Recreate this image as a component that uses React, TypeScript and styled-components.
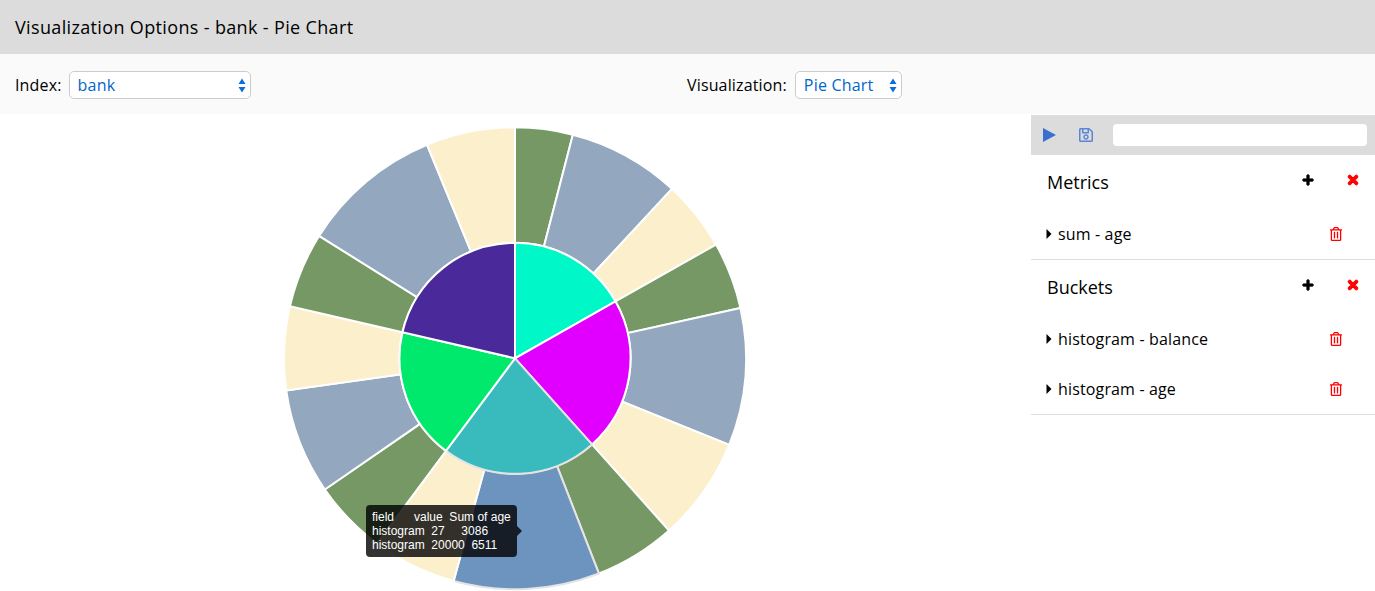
import React from 'react'
import styled, { createGlobalStyle } from 'styled-components'
import { FaPlus, FaRegSave, FaRegTrashAlt, FaTimes } from 'react-icons/fa'

const CX = 245
const CY = 244.3
const OUTER = 231
const INNER = 115.5

interface Slice {
  from: number;
  to: number;
  color: string;
  hovered?: boolean;
}

const innerSlices: Slice[] = [
  { from: 0, to: 60.5, color: '#00f7c8' },
  { from: 60.5, to: 138.2, color: '#e100ff' },
  { from: 138.2, to: 216.7, color: '#39bbbe', hovered: true },
  { from: 216.7, to: 283, color: '#00e96c' },
  { from: 283, to: 360, color: '#4a2a9a' },
]

const outerSlices: Slice[] = [
  { from: 0, to: 14.5, color: '#759865' },
  { from: 14.5, to: 42.8, color: '#93a7bf' },
  { from: 42.8, to: 60.5, color: '#fbefcc' },
  { from: 60.5, to: 77.4, color: '#759865' },
  { from: 77.4, to: 112, color: '#93a7bf' },
  { from: 112, to: 138.2, color: '#fbefcc' },
  { from: 138.2, to: 158.7, color: '#759865' },
  { from: 158.7, to: 195.4, color: '#6d93bf', hovered: true },
  { from: 195.4, to: 216.7, color: '#fbefcc' },
  { from: 216.7, to: 235.4, color: '#759865' },
  { from: 235.4, to: 262, color: '#93a7bf' },
  { from: 262, to: 283, color: '#fbefcc' },
  { from: 283, to: 302, color: '#759865' },
  { from: 302, to: 337.6, color: '#93a7bf' },
  { from: 337.6, to: 360, color: '#fbefcc' },
]

// Tooltip rows are space padded text, not table columns
const tooltipRows = [
  'field      value  Sum of age',
  'histogram  27     3086',
  'histogram  20000  6511',
]

const point = (radius: number, angle: number) => {
  const rad = (angle * Math.PI) / 180
  return `${CX + radius * Math.sin(rad)} ${CY - radius * Math.cos(rad)}`
}

// Arc path between two radii, angles measured clockwise from the top
const arcPath = (r0: number, r1: number, from: number, to: number) => {
  const large = to - from > 180 ? 1 : 0
  const start = `M${point(r1, from)} A${r1} ${r1} 0 ${large} 1 ${point(r1, to)}`
  if (r0 === 0) return `${start} L${CX} ${CY} Z`
  return `${start} L${point(r0, to)} A${r0} ${r0} 0 ${large} 0 ${point(r0, from)} Z`
}

const metrics = ['sum - age']
const buckets = ['histogram - balance', 'histogram - age']

const App: React.FC = () => {
  const renderItem = (label: string) => (
    <ItemRow key={label}>
      <ItemLabel>
        <svg width={6} height={10} viewBox="0 0 6 10">
          <path d="M0.5 0 L5.5 5 L0.5 10 Z" fill="#000" />
        </svg>
        {label}
      </ItemLabel>
      <TrashButton>
        <FaRegTrashAlt size={14} />
      </TrashButton>
    </ItemRow>
  )

  const renderSection = (title: string, items: string[]) => (
    <Section>
      <SectionHeader>
        <SectionTitle>{title}</SectionTitle>
        <SectionActions>
          <FaPlus size={12} color="#000" stroke="#000" strokeWidth={40} />
          <FaTimes size={14} color="#f00" stroke="#f00" strokeWidth={40} />
        </SectionActions>
      </SectionHeader>
      {items.map(renderItem)}
    </Section>
  )

  return (
    <>
      <GlobalStyle />
      <Header>Visualization Options - bank - Pie Chart</Header>
      <Toolbar>
        <IndexField>
          <FieldLabel>Index:</FieldLabel>
          <SelectBox $width={182}>
            <Select defaultValue="bank">
              <option>bank</option>
            </Select>
            <SelectArrows />
          </SelectBox>
        </IndexField>
        <VizField>
          <FieldLabel>Visualization:</FieldLabel>
          <SelectBox $width={107}>
            <Select defaultValue="Pie Chart">
              <option>Pie Chart</option>
            </Select>
            <SelectArrows />
          </SelectBox>
        </VizField>
      </Toolbar>
      <Main>
        <ChartArea>
          <ChartFrame>
            <svg width={490} height={477} viewBox="0 0 490 477">
              {outerSlices.map(s => (
                <Arc key={s.from} d={arcPath(INNER, OUTER, s.from, s.to)} fill={s.color} $hovered={s.hovered} />
              ))}
              {innerSlices.map(s => (
                <Arc key={s.from} d={arcPath(0, INNER, s.from, s.to)} fill={s.color} $hovered={s.hovered} />
              ))}
            </svg>
            <Tooltip>
              {tooltipRows.map(row => (
                <TooltipRow key={row}>{row}</TooltipRow>
              ))}
            </Tooltip>
          </ChartFrame>
        </ChartArea>
        <Sidebar>
          <SideBar>
            <svg width={13} height={14} viewBox="0 0 13 14">
              <path d="M0 0 L13 7 L0 14 Z" fill="#3a6fd0" />
            </svg>
            <SaveIcon>
              <FaRegSave size={16} />
            </SaveIcon>
            <SearchInput />
          </SideBar>
          {renderSection('Metrics', metrics)}
          {renderSection('Buckets', buckets)}
        </Sidebar>
      </Main>
    </>
  )
}

const SelectArrows: React.FC = () => (
  <ArrowsIcon width={8} height={15} viewBox="0 0 8 15">
    <path d="M4 0.5 L7.5 6 L0.5 6 Z M4 14.5 L0.5 9 L7.5 9 Z" fill="#0a6fdc" />
  </ArrowsIcon>
)

const GlobalStyle = createGlobalStyle`
  html, body {
    margin: 0;
    background: #fff;
    font-family: "Open Sans", "Liberation Sans", sans-serif;
    color: #000;
  }
`

const Header = styled.div`
  height: 54px;
  box-sizing: border-box;
  padding-left: 15px;
  background: #dcdcdc;
  font-size: 18px;
  letter-spacing: 0.35px;
  line-height: 54px;
`

const Toolbar = styled.div`
  display: flex;
  align-items: center;
  height: 60px;
  box-sizing: border-box;
  padding: 2px 0 0 15px;
  background: #fafafa;
`

const IndexField = styled.div`
  display: flex;
  align-items: center;
  gap: 7px;
  width: 672px;
`

const VizField = styled.div`
  display: flex;
  align-items: center;
  gap: 8px;
`

const FieldLabel = styled.span`
  font-size: 16px;
  letter-spacing: 0.15px;
`

const SelectBox = styled.div<{ $width: number }>`
  position: relative;
  width: ${props => props.$width}px;
  height: 28px;
`

const Select = styled.select`
  appearance: none;
  width: 100%;
  height: 100%;
  box-sizing: border-box;
  padding: 0 0 0 8px;
  background: #fff;
  border: 1px solid #ccc;
  border-radius: 5px;
  color: #0066cc;
  font-family: inherit;
  font-size: 16px;
  letter-spacing: 0.2px;
`

const ArrowsIcon = styled.svg`
  position: absolute;
  top: 7px;
  right: 5px;
  pointer-events: none;
`

const Main = styled.div`
  display: flex;
`

const ChartArea = styled.div`
  width: 1031px;
  padding-left: 270px;
  box-sizing: border-box;
`

const ChartFrame = styled.div`
  position: relative;
  width: 490px;
  height: 477px;

  svg {
    display: block;
  }
`

const Arc = styled.path<{ $hovered?: boolean }>`
  stroke: ${props => (props.$hovered ? '#e4e4e4' : '#fff')};
  stroke-width: 2px;
`

const Tooltip = styled.div`
  position: absolute;
  left: 96px;
  top: 391px;
  width: 151px;
  height: 52px;
  box-sizing: border-box;
  padding: 5px 6px;
  background: rgba(0, 0, 0, 0.8);
  border-radius: 4px;
  color: #fff;
  font-family: "Liberation Sans", Arial, sans-serif;
  font-size: 12px;
  line-height: 14px;

  &::after {
    content: '';
    position: absolute;
    right: -5px;
    top: 21px;
    border-top: 5px solid transparent;
    border-bottom: 5px solid transparent;
    border-left: 5px solid rgba(0, 0, 0, 0.8);
  }
`

const TooltipRow = styled.div`
  white-space: pre;
`

const Sidebar = styled.div`
  width: 344px;
`

const SideBar = styled.div`
  display: flex;
  align-items: center;
  height: 40px;
  margin-top: 1px;
  padding: 0 8px 0 12px;
  background: #dcdcdc;
`

const SaveIcon = styled.span`
  display: flex;
  margin-left: 22px;
  color: #5b86d8;
`

const SearchInput = styled.div`
  flex: 1;
  height: 22px;
  margin-left: 19px;
  background: #fff;
  border-radius: 4px;
`

const Section = styled.div`
  border-bottom: 1px solid #ddd;
`

const SectionHeader = styled.div`
  display: flex;
  align-items: center;
  justify-content: space-between;
  height: 54px;
  padding: 0 15px 0 16px;
`

const SectionTitle = styled.div`
  font-size: 18px;
`

const SectionActions = styled.div`
  display: flex;
  align-items: center;
  gap: 32px;
  margin-top: -5px;
`

const ItemRow = styled.div`
  display: flex;
  align-items: center;
  justify-content: space-between;
  height: 50px;
  padding: 0 32px 0 15px;
`

const ItemLabel = styled.div`
  display: flex;
  align-items: center;
  gap: 6px;
  font-size: 16px;
  letter-spacing: 0.15px;
`

const TrashButton = styled.span`
  display: flex;
  color: #f00;
`

export default App
